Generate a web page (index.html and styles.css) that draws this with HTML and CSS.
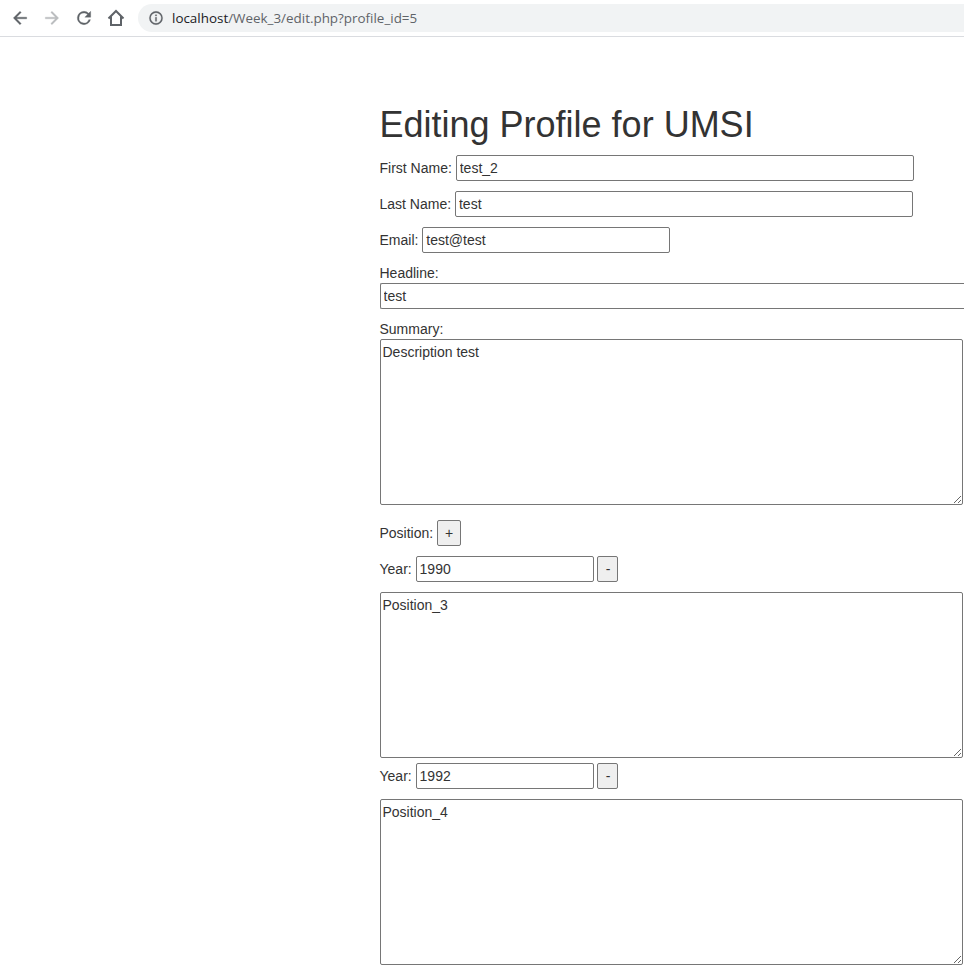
FILE: index.html
```html
<!DOCTYPE html>
<html lang="en">
<head>
<meta charset="utf-8">
<title>Editing Profile for UMSI</title>
<link rel="stylesheet" href="styles.css">
</head>
<body>
<header class="toolbar">
  <svg class="icon" viewBox="0 0 24 24"><path d="M20 11H7.83l5.59-5.59L12 4l-8 8 8 8 1.41-1.41L7.83 13H20v-2z"/></svg>
  <svg class="icon icon-off" viewBox="0 0 24 24"><path d="M12 4l-1.41 1.41L16.17 11H4v2h12.17l-5.58 5.59L12 20l8-8z"/></svg>
  <svg class="icon" viewBox="0 0 24 24"><path d="M17.65 6.35A7.96 7.96 0 0 0 12 4a8 8 0 1 0 7.73 10h-2.08A6 6 0 1 1 12 6c1.66 0 3.14.69 4.22 1.78L13 11h7V4l-2.35 2.35z"/></svg>
  <svg class="icon icon-home" viewBox="0 0 24 24"><path d="M3 12.6 12 3.6l9 9M6 10.5V20.4h12V10.5"/></svg>
  <div class="address">
    <svg class="info" viewBox="0 0 24 24"><path d="M11 7h2v2h-2zm0 4h2v6h-2zm1-9a10 10 0 1 0 0 20 10 10 0 0 0 0-20zm0 18a8 8 0 1 1 0-16 8 8 0 0 1 0 16z"/></svg>
    <span class="url"><span class="host">localhost</span>/Week_3/edit.php?profile_id=5</span>
  </div>
</header>
<main class="container">
  <h1>Editing Profile for UMSI</h1>
  <form>
    <p>First Name: <input class="name" type="text" value="test_2"></p>
    <p>Last Name: <input class="name" type="text" value="test"></p>
    <p>Email: <input class="email" type="text" value="test@test"></p>
    <p>Headline:<br><input class="headline" type="text" value="test"></p>
    <p>Summary:<br><textarea rows="8">Description test</textarea></p>
    <p>Position: <input class="btn-add" type="button" value="+"></p>
    <div>
      <p>Year: <input class="year" type="text" value="1990"> <input class="btn-remove" type="button" value="-"></p>
      <textarea rows="8">Position_3</textarea>
    </div>
    <div>
      <p>Year: <input class="year" type="text" value="1992"> <input class="btn-remove" type="button" value="-"></p>
      <textarea rows="8">Position_4</textarea>
    </div>
  </form>
</main>
</body>
</html>
```
FILE: styles.css
```css
* { box-sizing: border-box; }
html { overflow: hidden; }
body {
  margin: 0;
  height: 967px;
  overflow: hidden;
  background: #fff;
  color: #333;
  font: 14px/20px "Liberation Sans", Arial, sans-serif;
}
.toolbar {
  display: flex;
  align-items: center;
  gap: 12px;
  height: 37px;
  padding: 0 0 1px 10px;
  border-bottom: 1px solid #dadce0;
}
.icon {
  flex: none;
  width: 20px;
  height: 20px;
  fill: #5f6368;
  stroke: #5f6368;
  stroke-width: .4;
}
.icon-off { fill: #babcbe; stroke: #babcbe; }
.icon-home { fill: none; stroke-width: 2.4; }
.address {
  flex: 1;
  display: flex;
  align-items: center;
  gap: 8px;
  height: 28px;
  padding-left: 10px;
  border-radius: 14px 0 0 14px;
  background: #f1f3f4;
}
.info { width: 16px; height: 16px; fill: #5f6368; stroke: #5f6368; stroke-width: .4; }
.url { color: #5f6368; font: 13.42px/20px "Open Sans", sans-serif; white-space: nowrap; }
.host { color: #202124; }
.container { margin: 68.4px 0 0 379.5px; }
h1 { margin: 0 0 10px; font-size: 36px; font-weight: 400; line-height: 1.1; }
form { margin: 0; }
p { margin: 0 0 10px; white-space: nowrap; }
input, textarea {
  margin: 0;
  border: 1px solid #767676;
  border-radius: 2px;
  background: #fff;
  color: inherit;
  font: inherit;
}
input { height: 26px; padding: 1px 3px; }
textarea { width: 583.5px; height: 166px; padding: 2px; overflow: auto; resize: both; }
.name { width: 458px; }
.email { width: 248px; }
.headline { width: 100%; border-right: 0; border-radius: 2px 0 0 2px; }
.year { width: 178px; }
.btn-add, .btn-remove { background: #efefef; padding: 1px 0; }
.btn-add { width: 24px; }
.btn-remove { width: 21px; }
```
